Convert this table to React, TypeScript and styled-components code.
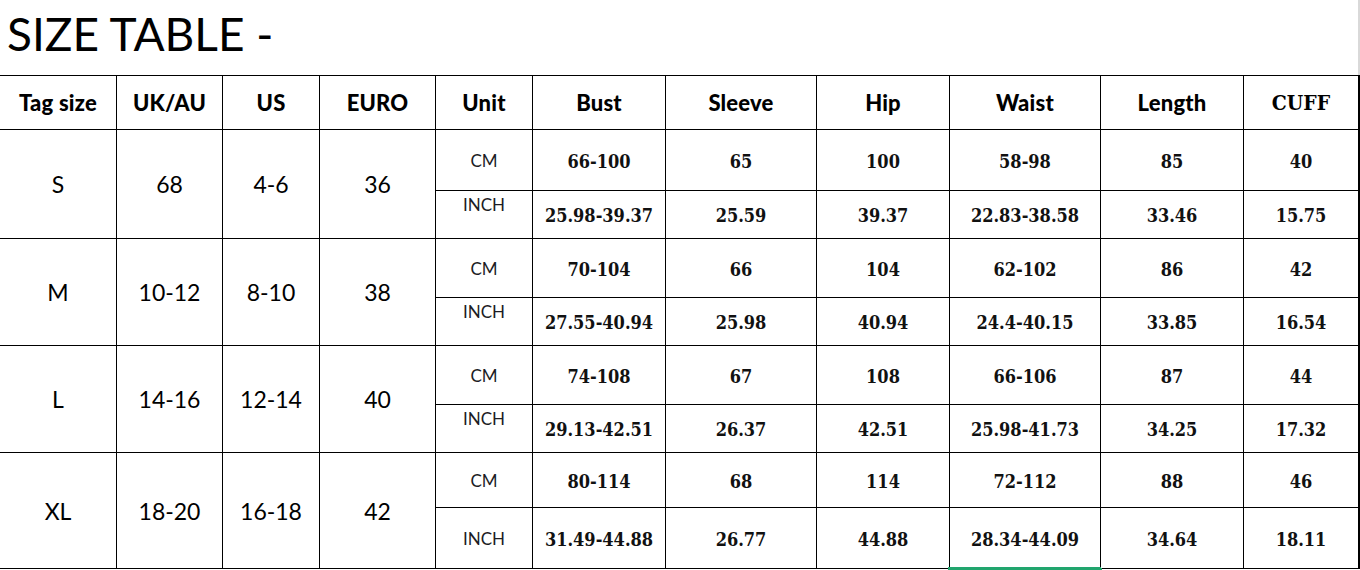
import React from "react";
import styled, { createGlobalStyle } from "styled-components";

const GlobalStyle = createGlobalStyle`
  html, body {
    margin: 0;
    padding: 0;
    background: #fff;
    overflow: hidden;
  }
`;

type Size = {
  tag: string;
  uk: string;
  us: string;
  euro: string;
  cm: string[];
  inch: string[];
  inchTop: boolean;
};

const headers = ["Tag size", "UK/AU", "US", "EURO", "Unit", "Bust", "Sleeve", "Hip", "Waist", "Length"];

const sizes: Size[] = [
  {
    tag: "S",
    uk: "68",
    us: "4-6",
    euro: "36",
    cm: ["66-100", "65", "100", "58-98", "85", "40"],
    inch: ["25.98-39.37", "25.59", "39.37", "22.83-38.58", "33.46", "15.75"],
    inchTop: true,
  },
  {
    tag: "M",
    uk: "10-12",
    us: "8-10",
    euro: "38",
    cm: ["70-104", "66", "104", "62-102", "86", "42"],
    inch: ["27.55-40.94", "25.98", "40.94", "24.4-40.15", "33.85", "16.54"],
    inchTop: true,
  },
  {
    tag: "L",
    uk: "14-16",
    us: "12-14",
    euro: "40",
    cm: ["74-108", "67", "108", "66-106", "87", "44"],
    inch: ["29.13-42.51", "26.37", "42.51", "25.98-41.73", "34.25", "17.32"],
    inchTop: true,
  },
  {
    tag: "XL",
    uk: "18-20",
    us: "16-18",
    euro: "42",
    cm: ["80-114", "68", "114", "72-112", "88", "46"],
    inch: ["31.49-44.88", "26.77", "44.88", "28.34-44.09", "34.64", "18.11"],
    inchTop: false,
  },
];

const App: React.FC = () => {
  return (
    <Page>
      <GlobalStyle />
      <TitleBar>
        <Title>SIZE TABLE -</Title>
      </TitleBar>
      <Grid>
        {headers.map((h) => (
          <HeadCell key={h}>{h}</HeadCell>
        ))}
        <HeadCell $serif>CUFF</HeadCell>

        {sizes.map((s, si) => (
          <React.Fragment key={s.tag}>
            <SizeCell>{s.tag}</SizeCell>
            <SizeCell>{s.uk}</SizeCell>
            <SizeCell>{s.us}</SizeCell>
            <SizeCell>{s.euro}</SizeCell>
            <UnitCell>CM</UnitCell>
            {s.cm.map((v, i) => (
              <ValueCell key={"cm" + i}>{v}</ValueCell>
            ))}
            <UnitCell $top={s.inchTop}>INCH</UnitCell>
            {s.inch.map((v, i) => (
              <ValueCell key={"in" + i} $selected={si === sizes.length - 1 && i === 3}>
                {v}
              </ValueCell>
            ))}
          </React.Fragment>
        ))}
      </Grid>
    </Page>
  );
};

const Page = styled.div`
  width: 1360px;
  height: 570px;
  background: #fff;
`;

const TitleBar = styled.div`
  height: 75px;
  box-sizing: border-box;
  padding: 6px 0 0 7px;
  border-right: 2px solid #d9d9d9;
`;

const Title = styled.h1`
  margin: 0;
  font-family: Lato, "Open Sans", sans-serif;
  font-weight: 400;
  font-size: 46px;
  line-height: 1.2;
  color: #000;
`;

const Grid = styled.div`
  display: grid;
  grid-template-columns: 116px 105px 96px 115px 96px 132px 150px 132px 150px 142px 114px;
  grid-template-rows: 53px 60px 47px 58px 47px 58px 47px 54px 60px;
  gap: 1px;
  background: #000;
  padding: 1px 2px 1px 1px;
  margin-left: -1px;
  width: max-content;
`;

const Cell = styled.div`
  position: relative;
  background: #fff;
  display: flex;
  align-items: center;
  justify-content: center;
  color: #000;
  white-space: nowrap;
`;

const HeadCell = styled(Cell)<{ $serif?: boolean }>`
  font-family: ${(p) => (p.$serif ? '"DejaVu Serif", serif' : 'Lato, "Open Sans", sans-serif')};
  font-weight: ${(p) => (p.$serif ? 700 : 900)};
  font-size: ${(p) => (p.$serif ? "21px" : "22px")};
  font-stretch: ${(p) => (p.$serif ? "condensed" : "normal")};
  letter-spacing: ${(p) => (p.$serif ? "0" : "0.2px")};
`;

const SizeCell = styled(Cell)`
  grid-row: span 2;
  font-family: Lato, "Open Sans", sans-serif;
  font-size: 23px;
  font-weight: 400;
`;

const UnitCell = styled(Cell)<{ $top?: boolean }>`
  font-family: Lato, "Open Sans", sans-serif;
  font-size: 17px;
  color: #1c1c24;
  align-items: ${(p) => (p.$top ? "flex-start" : "center")};
  padding-top: ${(p) => (p.$top ? "3px" : "0")};
`;

const ValueCell = styled(Cell)<{ $selected?: boolean }>`
  font-family: "DejaVu Serif", serif;
  font-stretch: condensed;
  font-weight: 700;
  font-size: 18px;
  color: #111;
  padding-top: 2px;

  &::after {
    content: "";
    display: ${(p) => (p.$selected ? "block" : "none")};
    position: absolute;
    left: -2px;
    right: -2px;
    bottom: -2px;
    height: 3px;
    background: #21a56e;
  }
`;

export default App;
